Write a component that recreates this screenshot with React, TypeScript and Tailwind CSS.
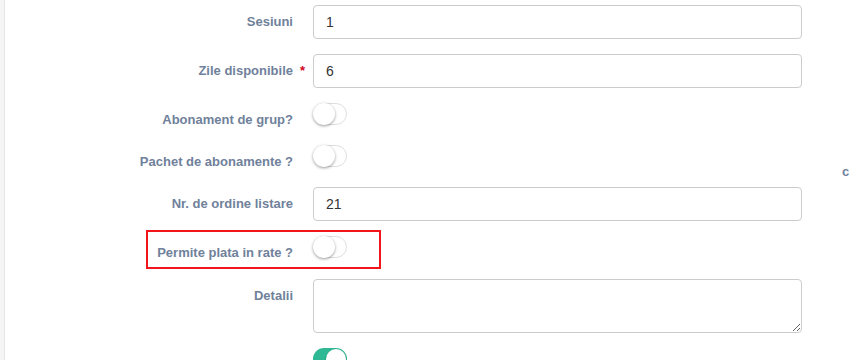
import type { ReactNode } from "react";

type FieldRowProps = {
  label: string;
  required?: boolean;
  children: ReactNode;
  className?: string;
};

function FieldRow(props: FieldRowProps) {
  return (
    <div className={`flex items-start ${props.className ?? ""}`}>
      <label className="w-[288px] shrink-0 pt-[7px] text-right text-[13px] leading-5 font-bold text-[#70819b]">
        {props.label}
      </label>
      <div className="w-[20px] shrink-0 pt-[7px] pl-[7px] text-[13px] leading-5 font-bold text-[#d0021b]">
        {props.required ? "*" : ""}
      </div>
      <div className="w-[489px]">{props.children}</div>
    </div>
  );
}

function TextInput(props: { value: string }) {
  return (
    <input
      type="text"
      defaultValue={props.value}
      className="h-[34px] w-full rounded-[4px] border border-[#cccccc] bg-white px-3 text-[14px] text-[#333333] outline-none"
    />
  );
}

function Toggle(props: { on?: boolean }) {
  if (props.on) {
    return (
      <div className="relative h-[22px] w-[34px] rounded-full bg-[#2fb894]">
        <div className="absolute right-[1px] top-[1px] h-[20px] w-[20px] rounded-full bg-white shadow-[0_1px_2px_rgba(0,0,0,0.3)]" />
      </div>
    );
  }
  return (
    <div className="relative h-[22px] w-[34px] rounded-full border border-[#dfdfdf] bg-white">
      <div className="absolute left-[-1px] top-[-1px] h-[22px] w-[22px] rounded-full bg-white shadow-[0_1px_3px_rgba(0,0,0,0.4)]" />
    </div>
  );
}

export default function App() {
  return (
    <div className="relative h-[360px] w-[850px] overflow-hidden bg-white font-['Liberation_Sans',Arial,sans-serif]">
      <div className="flex h-full">
        <div className="w-[5px] shrink-0 border-r border-[#e6e6e6] bg-[#f5f5f5]" />
        <div className="flex flex-col pt-[5px]">
          <FieldRow label="Sesiuni">
            <TextInput value="1" />
          </FieldRow>
          <FieldRow label="Zile disponibile" required className="mt-[15px]">
            <TextInput value="6" />
          </FieldRow>
          <FieldRow label="Abonament de grup?" className="mt-[15px]">
            <Toggle />
          </FieldRow>
          <FieldRow label="Pachet de abonamente ?" className="mt-[15px]">
            <Toggle />
          </FieldRow>
          <FieldRow label="Nr. de ordine listare" className="mt-[15px]">
            <TextInput value="21" />
          </FieldRow>
          <FieldRow label="Permite plata in rate ?" className="mt-[15px]">
            <Toggle />
          </FieldRow>
          <FieldRow label="Detalii" className="mt-[16px]">
            <textarea className="block h-[54px] w-full rounded-[4px] border border-[#cccccc] bg-white px-3 py-[6px] text-[14px] text-[#333333] outline-none" />
          </FieldRow>
          <FieldRow label="" className="mt-[15px]">
            <Toggle on />
          </FieldRow>
        </div>
      </div>

      {/* annotation box over the instalments row */}
      <div className="absolute left-[146px] top-[230px] h-[39px] w-[235px] border-2 border-[#f2151c]" />

      <span className="absolute left-[842px] top-[162px] text-[13px] font-bold text-[#70819b]">c</span>
    </div>
  );
}
